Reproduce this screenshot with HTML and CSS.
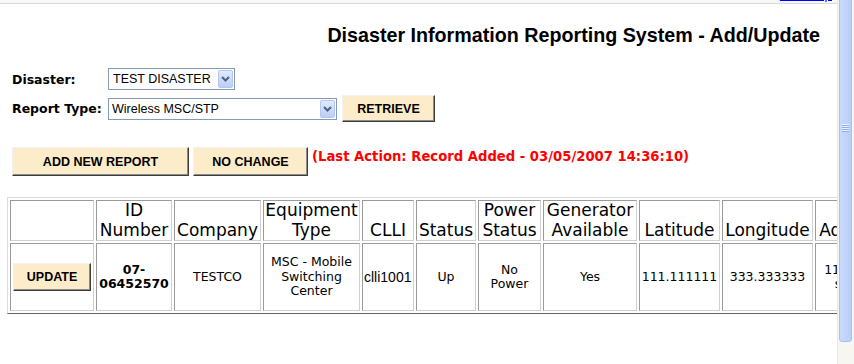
FILE: index.html
```html
<!DOCTYPE html>
<html lang="en">
<head>
    <meta charset="UTF-8">
    <title>Disaster Information Reporting System - Add/Update</title>
    <link rel="stylesheet" href="styles.css">
</head>
<body>
    <div class="window">
        <div class="page">
            <div class="crumbs">
                <div class="trail"><a href="#">FCC</a> &gt; <a href="#">PSHS</a> &gt; Disaster reports</div>
                <a class="sitemap" href="#">Site Map</a>
            </div>

            <h1>Disaster Information Reporting System - Add/Update</h1>

            <form class="filters">
                <div class="field-row">
                    <label class="label">Disaster:</label>
                    <div class="select select-disaster">
                        <span class="value">TEST DISASTER</span>
                        <span class="arrow"><svg width="9" height="6" viewBox="0 0 9 6"><path d="M1 1 L4.5 4.5 L8 1" fill="none" stroke="#4d6185" stroke-width="2"/></svg></span>
                    </div>
                </div>
                <div class="field-row second">
                    <label class="label">Report Type:</label>
                    <div class="select select-type">
                        <span class="value">Wireless MSC/STP</span>
                        <span class="arrow"><svg width="9" height="6" viewBox="0 0 9 6"><path d="M1 1 L4.5 4.5 L8 1" fill="none" stroke="#4d6185" stroke-width="2"/></svg></span>
                    </div>
                    <button type="button" class="button btn-retrieve">RETRIEVE</button>
                </div>
            </form>

            <div class="actions">
                <button type="button" class="button btn-add">ADD NEW REPORT</button>
                <button type="button" class="button btn-nochange">NO CHANGE</button>
                <span class="last-action">(Last Action: Record Added - 03/05/2007 14:36:10)</span>
            </div>

            <div class="table-wrap">
                <table class="reports">
                    <thead>
                        <tr>
                            <th class="c-action"></th>
                            <th class="c-id">ID Number</th>
                            <th class="c-company">Company</th>
                            <th class="c-equip">Equipment Type</th>
                            <th class="c-clli">CLLI</th>
                            <th class="c-status">Status</th>
                            <th class="c-power">Power Status</th>
                            <th class="c-gen">Generator Available</th>
                            <th class="c-lat">Latitude</th>
                            <th class="c-long">Longitude</th>
                            <th class="c-addr">Address</th>
                        </tr>
                    </thead>
                    <tbody>
                        <tr>
                            <td><button type="button" class="button btn-update">UPDATE</button></td>
                            <td class="id-number">07-06452570</td>
                            <td>TESTCO</td>
                            <td>MSC - Mobile<br>Switching<br>Center</td>
                            <td class="clli">clli1001</td>
                            <td>Up</td>
                            <td>No<br>Power</td>
                            <td>Yes</td>
                            <td>111.111111</td>
                            <td>333.333333</td>
                            <td>111 Main<br>street</td>
                        </tr>
                    </tbody>
                </table>
            </div>
        </div>
        <div class="scrollbar">
            <div class="thumb"><span class="grip"></span></div>
        </div>
    </div>
</body>
</html>
```

FILE: styles.css
```css
body {
    margin: 0;
    background-color: #fff;
    font-family: "DejaVu Sans", Verdana, sans-serif;
    overflow: hidden;
}

.window {
    display: flex;
    height: 364px;
}

.page {
    flex: 1;
    min-width: 0;
    overflow: hidden;
}

/* breadcrumb bar, scrolled mostly out of view */
.crumbs {
    display: flex;
    justify-content: space-between;
    align-items: flex-end;
    height: 16px;
    margin-top: -13px;
    padding: 0 5px 0 2px;
    background-color: #f7f7f7;
    border-bottom: 1px solid #d9d9d9;
    font-size: 11px;
    line-height: 16px;
}

.crumbs a {
    color: #0000ff;
    font-size: 13px;
}

.crumbs .sitemap {
    font-size: 12px;
}

h1 {
    margin: 20px 17px 0 0;
    font-family: "Liberation Sans", Arial, sans-serif;
    font-size: 19.7px;
    line-height: 23px;
    text-align: right;
    color: #000;
}

.filters {
    margin: 21px 0 0 0;
    padding-left: 12px;
}

.field-row {
    display: flex;
    align-items: center;
}

.field-row.second {
    margin-top: 5px;
}

.label {
    width: 96px;
    font-size: 12.5px;
    font-weight: bold;
}

.select {
    display: flex;
    align-items: center;
    height: 22px;
    box-sizing: border-box;
    border: 1px solid #7f9db9;
    background-color: #fff;
    padding-left: 3px;
    font-family: "Liberation Sans", Arial, sans-serif;
    font-size: 12.5px;
}

.select-disaster {
    width: 127px;
    padding-left: 4px;
}

.select-type {
    width: 229px;
}

.select .value {
    flex: 1;
}

.select .arrow {
    display: flex;
    align-items: center;
    justify-content: center;
    width: 15px;
    height: 18px;
    margin-right: 1px;
    box-sizing: border-box;
    border: 1px solid #b4c7f2;
    border-radius: 2px;
    background: linear-gradient(#e1eafe, #b9cdf8);
}

.button {
    box-sizing: border-box;
    background-color: #fcecc9;
    border: 1px solid;
    border-color: #f2f2f2 #3c3c3c #3c3c3c #f2f2f2;
    box-shadow: inset -1px -1px 0 #8a8a8a;
    font-family: "Liberation Sans", Arial, sans-serif;
    font-size: 12.5px;
    font-weight: bold;
    color: #000;
    padding: 0;
    cursor: pointer;
}

.btn-retrieve {
    width: 93px;
    height: 27px;
    margin-left: 5px;
}

.actions {
    display: flex;
    align-items: flex-start;
    gap: 4px;
    margin-top: 25px;
    padding-left: 12px;
}

.btn-add {
    width: 177px;
    height: 29px;
}

.btn-nochange {
    width: 115px;
    height: 29px;
}

.last-action {
    margin-top: 2px;
    color: #ff0000;
    font-size: 13.2px;
    font-weight: bold;
    white-space: nowrap;
}

.table-wrap {
    margin-top: 21px;
    padding-left: 7px;
}

.reports {
    table-layout: fixed;
    width: 887px;
    border: 1px solid;
    border-color: #dcdcdc #666 #666 #dcdcdc;
    border-spacing: 2px;
}

.reports th,
.reports td {
    border: 1px solid;
    border-color: #9a9a9a #d0d0d0 #d0d0d0 #9a9a9a;
}

.reports th {
    padding: 0 1px;
    font-size: 17px;
    font-weight: normal;
    line-height: 19.5px;
    vertical-align: bottom;
    text-align: center;
    overflow: hidden;
}

.reports td {
    height: 64px;
    padding: 1px;
    font-size: 12.5px;
    line-height: 14.5px;
    text-align: center;
    vertical-align: middle;
}

.c-action { width: 80px; }
.c-id { width: 72px; }
.c-company { width: 83px; }
.c-equip { width: 93px; }
.c-clli { width: 48px; }
.c-status { width: 56px; }
.c-power { width: 59px; }
.c-gen { width: 90px; }
.c-lat { width: 77px; }
.c-long { width: 87px; }
.c-addr { width: 72px; }

.reports td.id-number {
    font-weight: bold;
}

.reports td.clli {
    font-family: "Liberation Sans", Arial, sans-serif;
    font-size: 14px;
    text-align: left;
}

.btn-update {
    width: 78px;
    height: 28px;
}

/* window scrollbar */
.scrollbar {
    flex: none;
    width: 17px;
    box-sizing: border-box;
    padding: 0 2px 0 1px;
    background-color: #f7f6f1;
    border-left: 1px solid #e9e8e1;
    overflow: hidden;
}

.thumb {
    display: flex;
    align-items: center;
    justify-content: center;
    height: 428px;
    margin-top: -86px;
    box-sizing: border-box;
    background: linear-gradient(to right, #cadafd, #bacefa);
    border: 1px solid #a9c0f3;
    border-radius: 3px;
}

.grip {
    width: 7px;
    height: 8px;
    background: repeating-linear-gradient(#eef4ff 0 1px, #8eaef0 1px 2px);
}
```
